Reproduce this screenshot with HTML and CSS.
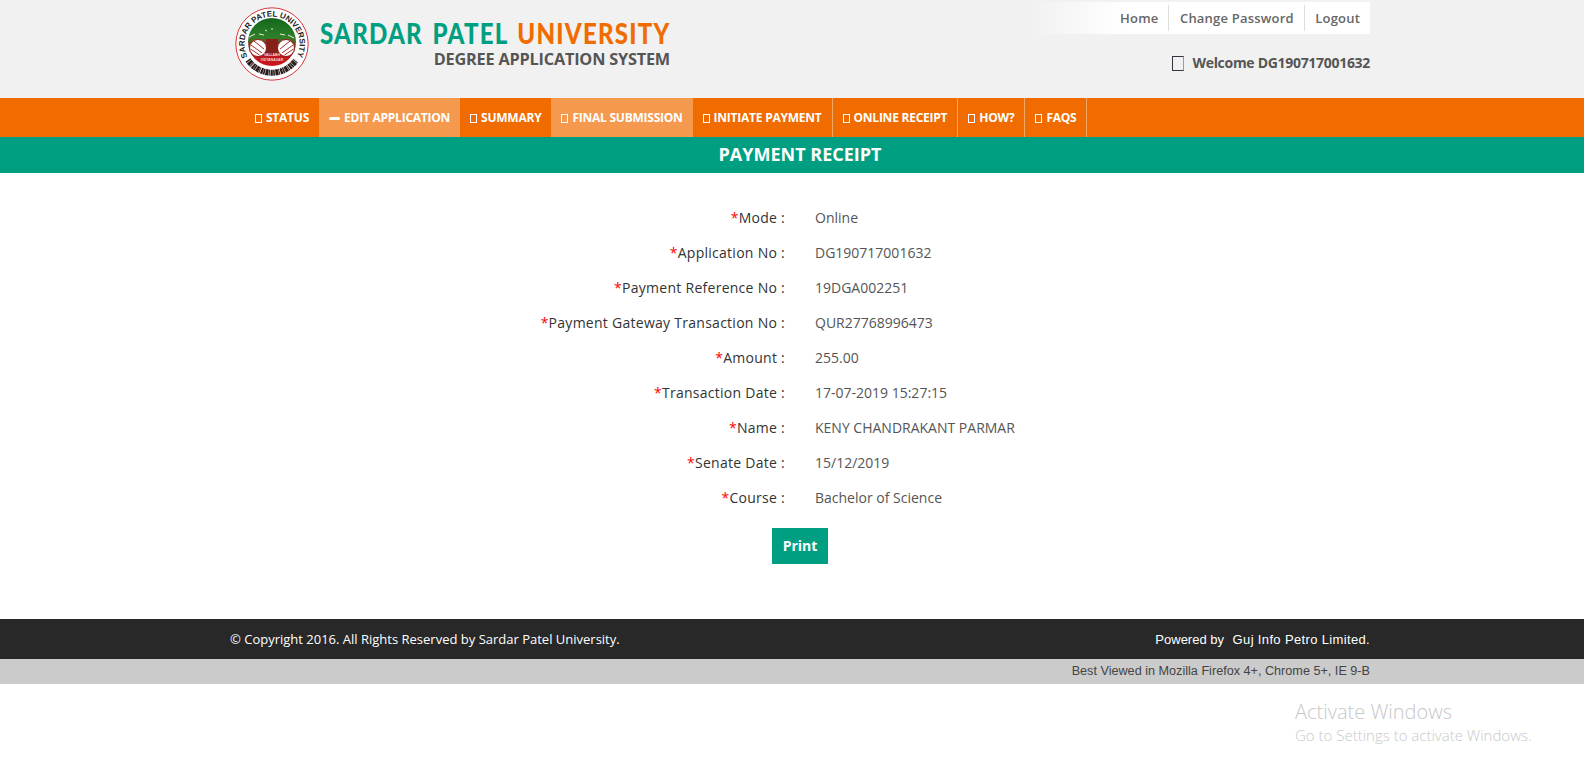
FILE: index.html
```html
<!DOCTYPE html>
<html lang="en">
<head>
<meta charset="utf-8">
<title>Payment Receipt - Sardar Patel University</title>
<link rel="stylesheet" href="styles.css">
</head>
<body>
<div class="page">
  <header class="header">
    <div class="container header-inner">
      <div class="brand">
        <svg class="seal" viewBox="0 0 74 74" width="74" height="74" aria-label="Sardar Patel University seal">
          <defs>
            <linearGradient id="disc" x1="0" y1="0" x2="0" y2="1">
              <stop offset="0" stop-color="#14661c"/>
              <stop offset="0.4" stop-color="#2c8028"/>
              <stop offset="0.58" stop-color="#8c3a20"/>
              <stop offset="0.72" stop-color="#b81c1c"/>
              <stop offset="1" stop-color="#cc1420"/>
            </linearGradient>
            <path id="arc" d="M12.7 49.9A27.5 27.5 0 1 1 61.3 49.9"/>
          </defs>
          <circle cx="37" cy="37" r="36.2" fill="#fff" stroke="#d8343c" stroke-width="1"/>
          <circle cx="37" cy="35" r="24" fill="url(#disc)"/>
          <text class="seal-text"><textPath href="#arc" textLength="112" lengthAdjust="spacing">SARDAR PATEL UNIVERSITY</textPath></text>
          <path d="M13 53A29 29 0 0 0 61 53" fill="none" stroke="#2a1c1c" stroke-width="6" stroke-dasharray="1.600 .5 3 .4 1 .7 2.200 .4"/>
          <path d="M31 32h12l1 15h-14z" fill="#86201a"/>
          <path d="M14 30l6-3M24 27l5 1M45 27l5 1M53 28l6 3M36 22h2M30 23l2 1" stroke="#f3e8d8" stroke-width="1"/>
          <circle cx="23" cy="41" r="8.5" fill="#fff" stroke="#8a1c18"/>
          <circle cx="51" cy="41" r="8.5" fill="#fff" stroke="#8a1c18"/>
          <path d="M16 38l11 8M15.500 42l9 6M19 34l10 8M58 38l-11 8M58.500 42l-9 6M55 34l-10 8" stroke="#b03028" stroke-width="1"/>
          <text class="seal-small" x="37" y="49">VALLABH</text>
          <text class="seal-small" x="37" y="54">VIDYANAGAR</text>
        </svg>
        <div class="brand-text">
          <div class="brand-title"><span class="teal">SARDAR PATEL</span> <span class="orange">UNIVERSITY</span></div>
          <div class="brand-sub">DEGREE APPLICATION SYSTEM</div>
        </div>
      </div>
      <div class="account">
        <nav class="top-links">
          <a href="#">Home</a>
          <a href="#">Change Password</a>
          <a href="#">Logout</a>
        </nav>
        <div class="welcome"><span class="welcome-icon"></span>Welcome DG190717001632</div>
      </div>
    </div>
  </header>

  <nav class="mainnav">
    <div class="container mainnav-inner">
      <a href="#" class="nav-item"><span class="tofu"></span>STATUS</a>
      <a href="#" class="nav-item light"><span class="pen"></span>EDIT APPLICATION</a>
      <a href="#" class="nav-item"><span class="tofu"></span>SUMMARY</a>
      <a href="#" class="nav-item light"><span class="tofu"></span>FINAL SUBMISSION</a>
      <a href="#" class="nav-item sep"><span class="tofu"></span>INITIATE PAYMENT</a>
      <a href="#" class="nav-item sep"><span class="tofu"></span>ONLINE RECEIPT</a>
      <a href="#" class="nav-item sep"><span class="tofu"></span>HOW?</a>
      <a href="#" class="nav-item sep"><span class="tofu"></span>FAQS</a>
    </div>
  </nav>

  <h1 class="title">PAYMENT RECEIPT</h1>

  <main class="container receipt">
    <div class="row"><div class="label"><span class="req">*</span>Mode :</div><div class="value">Online</div></div>
    <div class="row"><div class="label"><span class="req">*</span>Application No :</div><div class="value">DG190717001632</div></div>
    <div class="row"><div class="label"><span class="req">*</span>Payment Reference No :</div><div class="value">19DGA002251</div></div>
    <div class="row"><div class="label"><span class="req">*</span>Payment Gateway Transaction No :</div><div class="value">QUR27768996473</div></div>
    <div class="row"><div class="label"><span class="req">*</span>Amount :</div><div class="value">255.00</div></div>
    <div class="row"><div class="label"><span class="req">*</span>Transaction Date :</div><div class="value">17-07-2019 15:27:15</div></div>
    <div class="row"><div class="label"><span class="req">*</span>Name :</div><div class="value">KENY CHANDRAKANT PARMAR</div></div>
    <div class="row"><div class="label"><span class="req">*</span>Senate Date :</div><div class="value">15/12/2019</div></div>
    <div class="row"><div class="label"><span class="req">*</span>Course :</div><div class="value">Bachelor of Science</div></div>
    <div class="actions"><button class="print" type="button">Print</button></div>
  </main>

  <footer>
    <div class="foot-dark">
      <div class="container foot-inner">
        <span class="copy">© Copyright 2016. All Rights Reserved by Sardar Patel University.</span>
        <span class="powered">Powered by <a href="#">Guj Info Petro Limited.</a></span>
      </div>
    </div>
    <div class="foot-grey">
      <div class="container foot-note">Best Viewed in Mozilla Firefox 4+, Chrome 5+, IE 9-B</div>
    </div>
  </footer>

  <div class="watermark">
    <div class="wm-title">Activate Windows</div>
    <div class="wm-sub">Go to Settings to activate Windows.</div>
  </div>
</div>
</body>
</html>
```

FILE: styles.css
```css
* { box-sizing: border-box; }
html, body { margin: 0; padding: 0; height: 100%; overflow: hidden; background: #fff; }
body { font-family: "Open Sans", sans-serif; font-size: 14px; color: #333; }
a { color: inherit; text-decoration: none; }

.page { width: 1600px; height: 760px; position: relative; }
.container { width: 1170px; margin: 0 auto; padding: 0 15px; }

/* Header */
.header { height: 98px; background: #f1f1f1; }
.header-inner { display: flex; justify-content: space-between; height: 98px; }
.brand { display: flex; align-items: flex-start; padding: 7px 0 0 5px; }
.seal { display: block; flex: none; }
.seal-text { font: 700 8px "Liberation Sans", sans-serif; fill: #222; }
.seal-small { font: 700 3.4px "Liberation Sans", sans-serif; fill: #f6dcd0; text-anchor: middle; }
.brand-text { margin-left: 11px; width: 350px; }
.brand-title { font-family: Lato, sans-serif; font-weight: 900; font-size: 28px; line-height: 32px; letter-spacing: 1.4px; word-spacing: 3px; white-space: nowrap; margin-top: 10px; transform: scaleX(.86); transform-origin: left center; }
.teal { color: #009f81; }
.orange { color: #f06c00; }
.brand-sub { font-weight: 700; font-size: 16.300px; line-height: 20px; letter-spacing: -.2px; color: #555; text-align: right; white-space: nowrap; }

.account { display: flex; flex-direction: column; align-items: flex-end; width: 340px; }
.top-links { width: 100%; height: 32px; margin-top: 2px; display: flex; justify-content: flex-end; align-items: center; background: linear-gradient(to right, rgba(255,255,255,0), #fff 28%); font-size: 13px; font-weight: 600; letter-spacing: .2px; color: #666; }
.top-links a { display: block; padding: 0 10px 0 10.500px; line-height: 26px; border-left: 1px solid #ddd; }
.top-links a:first-child { border-left: 0; }
.welcome { display: flex; align-items: center; margin-top: 18px; font-size: 14px; font-weight: 700; letter-spacing: -.3px; color: #555; line-height: 22px; }
.welcome-icon { width: 12px; height: 15px; border: 1px solid #334; border-right-color: #6fa8c8; margin-right: 8px; }

/* Main navigation */
.mainnav { height: 39px; background: #f06c00; }
.mainnav-inner { display: flex; height: 39px; padding-left: 30px; }
.nav-item { display: flex; align-items: center; padding: 0 10px; font-size: 12px; font-weight: 700; letter-spacing: -.24px; color: #fff; white-space: nowrap; }
.nav-item.light { background: #f5994e; }
.nav-item.sep { border-right: 1px solid #f5a766; }
.tofu { width: 7px; height: 9px; border: 1px solid #fff; margin-right: 4px; margin-top: 2px; }
.pen { width: 11px; height: 3px; background: #fff; border-radius: 2px; margin-right: 4px; margin-top: 2px; }

.title { margin: 0; height: 36px; background: #009f81; color: #fff; font-size: 18px; font-weight: 700; line-height: 34px; text-align: center; }

/* Receipt */
.receipt { height: 446px; padding-top: 27px; }
.row { display: flex; height: 35px; align-items: center; }
.label { width: 555px; text-align: right; font-weight: 500; letter-spacing: .27px; color: #333; }
.req { color: #f00; font-weight: 400; }
.value { margin-left: 30px; color: #555; }
.actions { display: flex; justify-content: center; margin-top: 13px; }
.print { width: 56px; height: 36px; border: 0; padding: 0 0 2px; background: #009f81; color: #fff; font: 700 14px "Open Sans", sans-serif; }

/* Footer */
.foot-dark { height: 40px; background: #282828; color: #fff; }
.foot-inner { display: flex; justify-content: space-between; align-items: center; height: 40px; }
.copy { font-size: 13px; }
.powered { font-family: "Liberation Sans", sans-serif; font-size: 13px; }
.powered a { margin-left: 5px; letter-spacing: .35px; }
.foot-grey { height: 25px; background: #cbcbcb; }
.foot-note { text-align: right; font-family: "Liberation Sans", sans-serif; font-size: 12.650px; line-height: 25px; color: #444; }

/* OS overlay */
.watermark { position: absolute; left: 1295px; top: 699px; color: #c8c8c8; font-weight: 300; }
.wm-title { font-size: 20px; line-height: 26px; }
.wm-sub { font-size: 15px; line-height: 21px; }
```
